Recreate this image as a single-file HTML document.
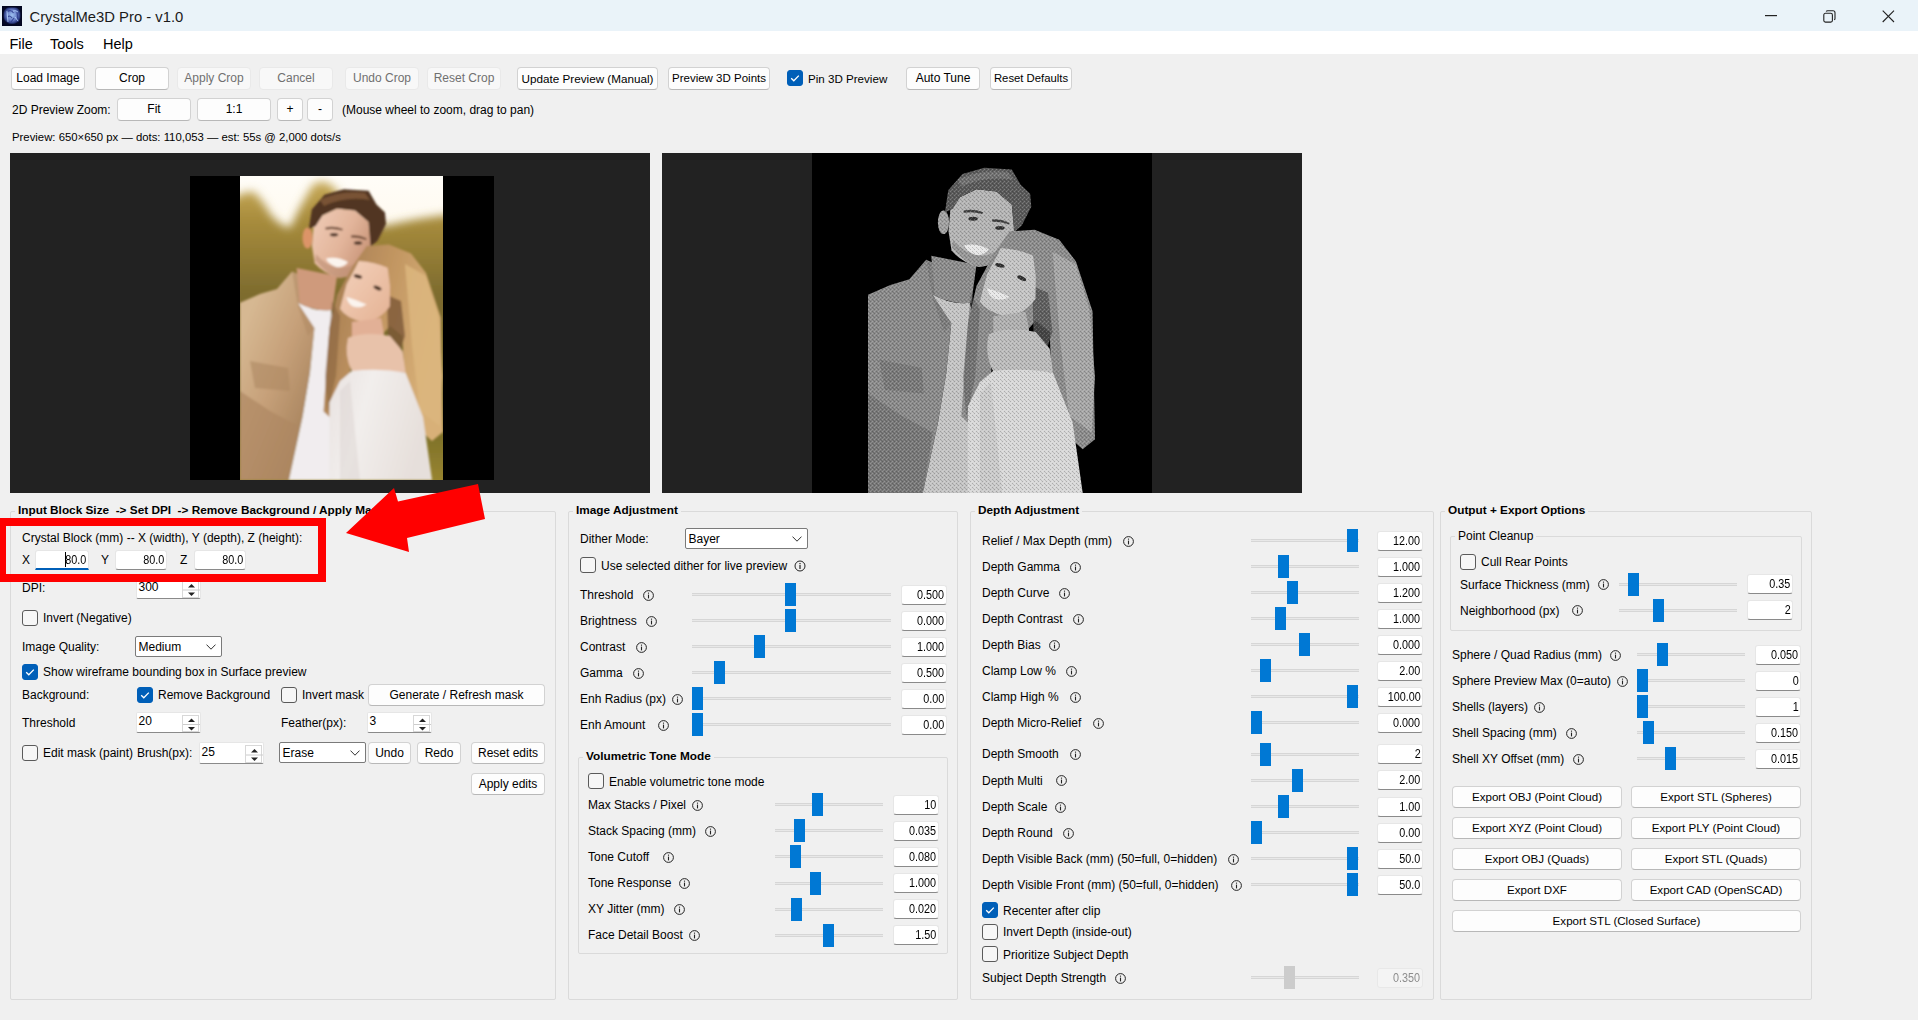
<!DOCTYPE html><html><head><meta charset="utf-8"><title>CrystalMe3D Pro - v1.0</title><style>
*{margin:0;padding:0;box-sizing:border-box}
html,body{width:1918px;height:1020px;overflow:hidden;background:#f0f0f0;font-family:"Liberation Sans", sans-serif;}
.t{position:absolute;white-space:nowrap;line-height:1;}
.btn{position:absolute;background:#fdfdfd;border:1px solid #d2d2d2;border-bottom-color:#b8b8b8;border-radius:4px;text-align:center;color:#000;white-space:nowrap}
.btn.dis{background:#f8f8f8;border-color:#e9e9e9;color:#707070}
.chk{position:absolute;width:16px;height:16px;border:1px solid #5a5a5a;border-radius:3px;background:#f6f6f6}
.chk.on{background:#005fb8;border-color:#005fb8}
.chk svg{position:absolute;left:-1px;top:-1px}
.ic{position:absolute}
.ent{position:absolute;background:#fff;border:1px solid #e6e6e6;border-bottom:1px solid #8a8a8a;border-radius:3px;text-align:right;padding-right:1.5px;font-size:12px;color:#000}
.ent.dis{background:#f4f4f4;border-color:#e8e8e8;color:#8c8c8c}
.ent.foc{border-bottom:2px solid #005fb8;border-radius:3px 3px 0 0}
.num{display:inline-block;transform:scaleX(0.9);transform-origin:100% 50%}
.car{position:absolute;left:28.7px;top:1px;width:1.2px;height:15px;background:#000}
.trk{position:absolute;height:3px;background:#e8e8e8;border-top:1px solid #d6d6d6;border-bottom:1px solid #d6d6d6}
.thm{position:absolute;width:11px;height:23px;background:#0078d4}
.thm.dis{background:#cccccc}
.frm{position:absolute;border:1px solid #dadada;border-radius:2px}
.ftl{background:#f0f0f0;white-space:pre}
.cmb{position:absolute;background:#fff;border:1px solid #7a7a7a;border-radius:2px;padding-left:2.5px;font-size:12px}
.spn{position:absolute;background:#fff;border:1px solid #e6e6e6;border-bottom:1px solid #8a8a8a;border-radius:2px;padding-left:1.5px;font-size:12px}
.sar{position:absolute;right:1px;top:2px;width:17px;border:1px solid #d8d8d8;background:#fff}
</style></head><body>
<div style="position:absolute;left:0;top:0;width:1918px;height:31px;background:#eaf3f9"></div>
<div style="position:absolute;left:0;top:31px;width:1918px;height:23px;background:#ffffff"></div>
<svg style="position:absolute;left:2px;top:6px" width="20" height="20" viewBox="0 0 20 20"><defs><radialGradient id="ig" cx="50%" cy="45%" r="55%"><stop offset="0" stop-color="#9cc0f0"/><stop offset="0.55" stop-color="#6a80c8"/><stop offset="0.85" stop-color="#2a3a80"/><stop offset="1" stop-color="#050a28"/></radialGradient></defs><rect width="20" height="20" fill="#020620"/><rect x="1.5" y="1.5" width="17" height="17" fill="url(#ig)"/><path d="M5 6 Q9 3 11.5 7 M15 5.5 L16 16 M5.5 11 Q8 9 10 12 M12 12 L9 16" fill="none" stroke="#2a3a8a" stroke-width="1.2" opacity="0.8"/><path d="M5 5 L6 16 M11 5 Q14 4 16 6 M13 11 L16 15" fill="none" stroke="#b8d8ff" stroke-width="1" opacity="0.8"/></svg>
<div class="t" style="left:29.5px;top:9.77px;font-size:14.8px;color:#1a1a1a;">CrystalMe3D Pro - v1.0</div>
<svg style="position:absolute;left:1765px;top:15px" width="12" height="2"><rect width="12" height="1.2" fill="#222"/></svg>
<svg style="position:absolute;left:1823px;top:10px" width="13" height="13" viewBox="0 0 13 13"><rect x="0.8" y="3.3" width="8.6" height="8.8" rx="1.6" fill="none" stroke="#222" stroke-width="1.1"/><path d="M3.2 1.6 Q3.6 0.8 4.6 0.8 L10 0.8 Q12 0.8 12 2.8 L12 8.4 Q12 9.4 11.2 9.8" fill="none" stroke="#222" stroke-width="1.1"/></svg>
<svg style="position:absolute;left:1882px;top:9.5px" width="13" height="13" viewBox="0 0 13 13"><path d="M0.7 0.7 L12 12 M12 0.7 L0.7 12" stroke="#222" stroke-width="1.1"/></svg>
<div class="t" style="left:9.5px;top:37.22px;font-size:14.5px;color:#000;">File</div>
<div class="t" style="left:50px;top:37.22px;font-size:14.5px;color:#000;">Tools</div>
<div class="t" style="left:103px;top:37.22px;font-size:14.5px;color:#000;">Help</div>
<div class="btn" style="left:11px;top:67px;width:74px;height:23px;line-height:21.5px;font-size:12px">Load Image</div>
<div class="btn" style="left:95px;top:67px;width:74px;height:23px;line-height:21.5px;font-size:12px">Crop</div>
<div class="btn dis" style="left:177px;top:67px;width:74px;height:23px;line-height:21.5px;font-size:12px">Apply Crop</div>
<div class="btn dis" style="left:259px;top:67px;width:74px;height:23px;line-height:21.5px;font-size:12px">Cancel</div>
<div class="btn dis" style="left:345px;top:67px;width:74px;height:23px;line-height:21.5px;font-size:12px">Undo Crop</div>
<div class="btn dis" style="left:427px;top:67px;width:74px;height:23px;line-height:21.5px;font-size:12px">Reset Crop</div>
<div class="btn" style="left:517px;top:67px;width:141px;height:23px;line-height:21.5px;font-size:11.7px">Update Preview (Manual)</div>
<div class="btn" style="left:668px;top:67px;width:102px;height:23px;line-height:21.5px;font-size:11.5px">Preview 3D Points</div>
<div class="chk on" style="left:787px;top:70.0px"><svg width="16" height="16" viewBox="0 0 16 16"><path d="M4.2 8.2 L6.8 10.8 L11.8 5.6" fill="none" stroke="#fff" stroke-width="1.3"/></svg></div>
<div class="t" style="left:808px;top:72.83px;font-size:11.6px;color:#000;">Pin 3D Preview</div>
<div class="btn" style="left:906px;top:67px;width:74px;height:23px;line-height:21.5px;font-size:12px">Auto Tune</div>
<div class="btn" style="left:990px;top:67px;width:82px;height:23px;line-height:21.5px;font-size:11.3px">Reset Defaults</div>
<div class="t" style="left:12px;top:103.64px;font-size:12px;color:#000;">2D Preview Zoom:</div>
<div class="btn" style="left:117px;top:98px;width:74px;height:23px;line-height:21.5px;font-size:12px">Fit</div>
<div class="btn" style="left:197px;top:98px;width:74px;height:23px;line-height:21.5px;font-size:12px">1:1</div>
<div class="btn" style="left:277px;top:98px;width:26px;height:23px;line-height:21.5px;font-size:12px">+</div>
<div class="btn" style="left:307px;top:98px;width:26px;height:23px;line-height:21.5px;font-size:12px">-</div>
<div class="t" style="left:342px;top:103.64px;font-size:12px;color:#000;">(Mouse wheel to zoom, drag to pan)</div>
<div class="t" style="left:12px;top:131.96px;font-size:11.35px;color:#000;">Preview: 650×650 px — dots: 110,053 — est: 55s @ 2,000 dots/s</div>
<div style="position:absolute;left:10px;top:153px;width:640px;height:340px;background:#222222"></div>
<div style="position:absolute;left:190px;top:176px;width:304px;height:304px;background:#000"></div>
<svg style="position:absolute;left:240px;top:176px" width="203" height="304" viewBox="0 0 203 304">
<defs>
<linearGradient id="sky" x1="0" y1="0" x2="0" y2="1"><stop offset="0" stop-color="#fffdf8"/><stop offset="0.15" stop-color="#fffaf0"/><stop offset="0.3" stop-color="#f4e4c0"/><stop offset="1" stop-color="#c0a048"/></linearGradient>
<linearGradient id="tree" x1="0" y1="0" x2="0" y2="1"><stop offset="0" stop-color="#c8aa58"/><stop offset="0.12" stop-color="#a88c3c"/><stop offset="0.35" stop-color="#7e6c2e"/><stop offset="0.7" stop-color="#6c6428"/><stop offset="1" stop-color="#a08a30"/></linearGradient>
<linearGradient id="gjk" x1="0" y1="0.3" x2="0.6" y2="1"><stop offset="0" stop-color="#d6b892"/><stop offset="0.5" stop-color="#c6a079"/><stop offset="1" stop-color="#a8845e"/></linearGradient>
<linearGradient id="gfc" x1="0" y1="0" x2="1" y2="0.6"><stop offset="0" stop-color="#f0cdb8"/><stop offset="0.6" stop-color="#e2b49a"/><stop offset="1" stop-color="#c89478"/></linearGradient>
<linearGradient id="gwh" x1="0" y1="0" x2="1" y2="0.4"><stop offset="0" stop-color="#a07850"/><stop offset="0.5" stop-color="#c09460"/><stop offset="1" stop-color="#d8b078"/></linearGradient>
<linearGradient id="gwf" x1="0" y1="0" x2="1" y2="1"><stop offset="0" stop-color="#f4d2bc"/><stop offset="1" stop-color="#e4b294"/></linearGradient>
<linearGradient id="gtp" x1="0" y1="0" x2="1" y2="0.3"><stop offset="0" stop-color="#e8e2e0"/><stop offset="0.4" stop-color="#f2eeec"/><stop offset="1" stop-color="#e6dfdb"/></linearGradient>
<filter id="bl6" x="-20%" y="-20%" width="140%" height="140%"><feGaussianBlur stdDeviation="5"/></filter>
<filter id="bl1" x="-5%" y="-5%" width="110%" height="110%"><feGaussianBlur stdDeviation="1.0"/></filter>
</defs>
<rect width="203" height="304" fill="url(#sky)"/>
<path d="M-10,24 Q6,14 14,16 Q24,26 30,38 Q40,50 50,52 Q60,30 72,10 Q84,0 96,14 L118,40 L145,50 Q176,42 215,38 L215,320 L-10,320 Z" fill="url(#tree)" filter="url(#bl6)"/>
<g filter="url(#bl1)">
<path d="M0,126.7 L20,118 L37,113 L52,95.4 L62,100 L74.5,152 L70,196.7 L62.6,241 L49,304 L0,304 Z" fill="url(#gjk)"/>
<path d="M0,215 L0,304 L49,304 L58,250 L30,235 Z" fill="#ae8862" opacity="0.7"/>
<path d="M10,185 L48,192 L50,215 L15,212 Z" fill="#ae8862" opacity="0.6"/>
<path d="M52,95.4 L62,100 L74.5,152 L68,160 L58,130 Z" fill="#ae8862" opacity="0.5"/>
<path d="M58,127 Q75,136 91,134 L95.4,152 L89.4,226.5 L92.4,304 L49,304 L62.6,241 L70,196.7 L74.5,152 Z" fill="#f1edef"/>
<path d="M56.6,92 L97,100 L92.4,134 Q75,136 59.6,126.7 Z" fill="#cf9a7c"/>
<path d="M73.7,50 L82.5,39.3 L97,32.4 L115,34.4 L128.6,46 L131,70 L130.6,82.4 L123.7,92.2 Q112,101 99,102 Q84,98 74.7,87.3 L72,70 Z" fill="url(#gfc)"/>
<path d="M75,84 Q88,100 100,102 Q115,100 124,92 L126,80 Q112,92 100,92 Q86,90 76,78 Z" fill="#b88a70" opacity="0.55"/>
<ellipse cx="67.5" cy="62" rx="5" ry="10.5" fill="#dc9468"/>
<path d="M85.5,51.5 Q94,49.5 103,53 L102,54.5 Q94,52 85.5,53.5 Z" fill="#6a4630"/>
<path d="M111,59.5 Q119,58.5 126.7,62.5 L126,64 Q119,61 111,61.5 Z" fill="#6a4630"/>
<ellipse cx="94" cy="58.8" rx="4.2" ry="1.7" fill="#4a3024"/>
<ellipse cx="118" cy="67" rx="4.2" ry="1.7" fill="#4a3024"/>
<path d="M86,82.5 Q97,80 108,86 Q104,92 96,91 Q88,88 86,82.5 Z" fill="#fbf4ee"/>
<path d="M68.8,53 L71.8,33.4 L84.5,18.7 L104,13.3 L128.6,14.8 L136.5,28.5 L145,36.4 L146,48 L137.5,64.8 L130.6,70.7 L128.6,46 L115,34.4 L97,32.4 L82.5,39.3 L75.7,50 Z" fill="#513621"/>
<path d="M80,24 Q100,14 125,17 L130,24 Q105,20 84,30 Z" fill="#8a6040" opacity="0.7"/>
<path d="M126.7,70 L149,68.6 L171,77.5 L186,97 L200.8,141.5 L203,256 L192,265 L165.5,241 L162.5,160 L150,150 L141,160 L112,160 L110,200 L100,220 L89.4,241 L83.5,235.5 L89.4,152 L97,119 L113,89.4 Z" fill="url(#gwh)"/>
<path d="M165,88 L186,100 L198,140 L203,200 L200,250 L180,235 L172,170 Z" fill="#dcb67e" opacity="0.85"/>
<path d="M147,119 L161,125 L165,160 L160,175 L148,160 Z" fill="#7c5838" opacity="0.8"/>
<path d="M92,125 L100,140 L96,200 L88,236 L85,200 Z" fill="#7c5838" opacity="0.45"/>
<path d="M118.8,85 Q135,86 147.6,91.7 L150,110 L149.8,130.5 Q138,146 123.2,146 Q106,142 100,132.7 L106.6,108.3 L115.5,91.7 Z" fill="url(#gwf)"/>
<ellipse cx="118" cy="100.5" rx="4.3" ry="1.8" fill="#4a3024" transform="rotate(15 118 100.5)"/>
<ellipse cx="137.5" cy="112" rx="4.3" ry="1.8" fill="#4a3024" transform="rotate(25 137.5 112)"/>
<path d="M106.6,121 Q117,124 126.6,128.5 Q120,133 112,130 Q107,126 106.6,121 Z" fill="#fbf4ee"/>
<path d="M112,146 L141,142 L145,164 L112,164 Z" fill="#e2b096"/>
<path d="M108,162 Q125,155 150,160 L162.5,175 L165.5,196.7 L111.8,195 Q104,180 108,162 Z" fill="#e8c2aa"/>
<path d="M89.4,226.5 L100,205 L111.8,195 Q140,192 165.5,196.7 L183,241 L192,304 L89.4,304 Z" fill="url(#gtp)"/>
<path d="M100,215 L110,205 L120,304 L100,304 Z" fill="#d8d0cc" opacity="0.4"/>
</g>
</svg>
<div style="position:absolute;left:662px;top:153px;width:640px;height:340px;background:#222222"></div>
<div style="position:absolute;left:812px;top:153px;width:340px;height:340px;background:#000"></div>
<svg style="position:absolute;left:868px;top:153px" width="228" height="340" viewBox="0 0 228 340">
<defs>
<filter id="gbl" x="-5%" y="-5%" width="110%" height="110%"><feGaussianBlur stdDeviation="0.8"/></filter>
<pattern id="dth" width="4" height="4" patternUnits="userSpaceOnUse"><rect x="0" y="0" width="1" height="1" fill="#fff" fill-opacity="0.22"/><rect x="2" y="2" width="1" height="1" fill="#fff" fill-opacity="0.22"/><rect x="2" y="0" width="1" height="1" fill="#000" fill-opacity="0.2"/><rect x="0" y="2" width="1" height="1" fill="#000" fill-opacity="0.2"/><rect x="1" y="3" width="1" height="1" fill="#000" fill-opacity="0.12"/><rect x="3" y="1" width="1" height="1" fill="#fff" fill-opacity="0.12"/></pattern>
<mask id="fm"><g transform="scale(1.1182)">
<path d="M0,126.7 L20,118 L37,113 L52,95.4 L62,100 L74.5,152 L70,196.7 L62.6,241 L49,304 L0,304 Z" fill="#ffffff"/>
<path d="M0,215 L0,304 L49,304 L58,250 L30,235 Z" fill="#ffffff" opacity="0.7"/>
<path d="M10,185 L48,192 L50,215 L15,212 Z" fill="#ffffff" opacity="0.6"/>
<path d="M52,95.4 L62,100 L74.5,152 L68,160 L58,130 Z" fill="#ffffff" opacity="0.5"/>
<path d="M58,127 Q75,136 91,134 L95.4,152 L89.4,226.5 L92.4,304 L49,304 L62.6,241 L70,196.7 L74.5,152 Z" fill="#ffffff"/>
<path d="M56.6,92 L97,100 L92.4,134 Q75,136 59.6,126.7 Z" fill="#ffffff"/>
<path d="M73.7,50 L82.5,39.3 L97,32.4 L115,34.4 L128.6,46 L131,70 L130.6,82.4 L123.7,92.2 Q112,101 99,102 Q84,98 74.7,87.3 L72,70 Z" fill="#ffffff"/>
<path d="M75,84 Q88,100 100,102 Q115,100 124,92 L126,80 Q112,92 100,92 Q86,90 76,78 Z" fill="#ffffff" opacity="0.55"/>
<ellipse cx="67.5" cy="62" rx="5" ry="10.5" fill="#ffffff"/>
<path d="M85.5,51.5 Q94,49.5 103,53 L102,54.5 Q94,52 85.5,53.5 Z" fill="#ffffff"/>
<path d="M111,59.5 Q119,58.5 126.7,62.5 L126,64 Q119,61 111,61.5 Z" fill="#ffffff"/>
<ellipse cx="94" cy="58.8" rx="4.2" ry="1.7" fill="#ffffff"/>
<ellipse cx="118" cy="67" rx="4.2" ry="1.7" fill="#ffffff"/>
<path d="M86,82.5 Q97,80 108,86 Q104,92 96,91 Q88,88 86,82.5 Z" fill="#ffffff"/>
<path d="M68.8,53 L71.8,33.4 L84.5,18.7 L104,13.3 L128.6,14.8 L136.5,28.5 L145,36.4 L146,48 L137.5,64.8 L130.6,70.7 L128.6,46 L115,34.4 L97,32.4 L82.5,39.3 L75.7,50 Z" fill="#ffffff"/>
<path d="M80,24 Q100,14 125,17 L130,24 Q105,20 84,30 Z" fill="#ffffff" opacity="0.7"/>
<path d="M126.7,70 L149,68.6 L171,77.5 L186,97 L200.8,141.5 L203,256 L192,265 L165.5,241 L162.5,160 L150,150 L141,160 L112,160 L110,200 L100,220 L89.4,241 L83.5,235.5 L89.4,152 L97,119 L113,89.4 Z" fill="#ffffff"/>
<path d="M165,88 L186,100 L198,140 L203,200 L200,250 L180,235 L172,170 Z" fill="#ffffff" opacity="0.85"/>
<path d="M147,119 L161,125 L165,160 L160,175 L148,160 Z" fill="#ffffff" opacity="0.8"/>
<path d="M92,125 L100,140 L96,200 L88,236 L85,200 Z" fill="#ffffff" opacity="0.45"/>
<path d="M118.8,85 Q135,86 147.6,91.7 L150,110 L149.8,130.5 Q138,146 123.2,146 Q106,142 100,132.7 L106.6,108.3 L115.5,91.7 Z" fill="#ffffff"/>
<ellipse cx="118" cy="100.5" rx="4.3" ry="1.8" fill="#ffffff" transform="rotate(15 118 100.5)"/>
<ellipse cx="137.5" cy="112" rx="4.3" ry="1.8" fill="#ffffff" transform="rotate(25 137.5 112)"/>
<path d="M106.6,121 Q117,124 126.6,128.5 Q120,133 112,130 Q107,126 106.6,121 Z" fill="#ffffff"/>
<path d="M112,146 L141,142 L145,164 L112,164 Z" fill="#ffffff"/>
<path d="M108,162 Q125,155 150,160 L162.5,175 L165.5,196.7 L111.8,195 Q104,180 108,162 Z" fill="#ffffff"/>
<path d="M89.4,226.5 L100,205 L111.8,195 Q140,192 165.5,196.7 L183,241 L192,304 L89.4,304 Z" fill="#ffffff"/>
<path d="M100,215 L110,205 L120,304 L100,304 Z" fill="#ffffff" opacity="0.4"/>
</g></mask>
</defs>
<g transform="scale(1.1182)">
<path d="M0,126.7 L20,118 L37,113 L52,95.4 L62,100 L74.5,152 L70,196.7 L62.6,241 L49,304 L0,304 Z" fill="#8a8a8a"/>
<path d="M0,215 L0,304 L49,304 L58,250 L30,235 Z" fill="#707070" opacity="0.7"/>
<path d="M10,185 L48,192 L50,215 L15,212 Z" fill="#707070" opacity="0.6"/>
<path d="M52,95.4 L62,100 L74.5,152 L68,160 L58,130 Z" fill="#707070" opacity="0.5"/>
<path d="M58,127 Q75,136 91,134 L95.4,152 L89.4,226.5 L92.4,304 L49,304 L62.6,241 L70,196.7 L74.5,152 Z" fill="#c4c4c4"/>
<path d="M56.6,92 L97,100 L92.4,134 Q75,136 59.6,126.7 Z" fill="#8c8c8c"/>
<path d="M73.7,50 L82.5,39.3 L97,32.4 L115,34.4 L128.6,46 L131,70 L130.6,82.4 L123.7,92.2 Q112,101 99,102 Q84,98 74.7,87.3 L72,70 Z" fill="#b4b4b4"/>
<path d="M75,84 Q88,100 100,102 Q115,100 124,92 L126,80 Q112,92 100,92 Q86,90 76,78 Z" fill="#808080" opacity="0.55"/>
<ellipse cx="67.5" cy="62" rx="5" ry="10.5" fill="#a0a0a0"/>
<path d="M85.5,51.5 Q94,49.5 103,53 L102,54.5 Q94,52 85.5,53.5 Z" fill="#404040"/>
<path d="M111,59.5 Q119,58.5 126.7,62.5 L126,64 Q119,61 111,61.5 Z" fill="#404040"/>
<ellipse cx="94" cy="58.8" rx="4.2" ry="1.7" fill="#303030"/>
<ellipse cx="118" cy="67" rx="4.2" ry="1.7" fill="#303030"/>
<path d="M86,82.5 Q97,80 108,86 Q104,92 96,91 Q88,88 86,82.5 Z" fill="#e8e8e8"/>
<path d="M68.8,53 L71.8,33.4 L84.5,18.7 L104,13.3 L128.6,14.8 L136.5,28.5 L145,36.4 L146,48 L137.5,64.8 L130.6,70.7 L128.6,46 L115,34.4 L97,32.4 L82.5,39.3 L75.7,50 Z" fill="#5a5a5a"/>
<path d="M80,24 Q100,14 125,17 L130,24 Q105,20 84,30 Z" fill="#7a7a7a" opacity="0.7"/>
<path d="M126.7,70 L149,68.6 L171,77.5 L186,97 L200.8,141.5 L203,256 L192,265 L165.5,241 L162.5,160 L150,150 L141,160 L112,160 L110,200 L100,220 L89.4,241 L83.5,235.5 L89.4,152 L97,119 L113,89.4 Z" fill="#8c8c8c"/>
<path d="M165,88 L186,100 L198,140 L203,200 L200,250 L180,235 L172,170 Z" fill="#aaaaaa" opacity="0.85"/>
<path d="M147,119 L161,125 L165,160 L160,175 L148,160 Z" fill="#555555" opacity="0.8"/>
<path d="M92,125 L100,140 L96,200 L88,236 L85,200 Z" fill="#555555" opacity="0.45"/>
<path d="M118.8,85 Q135,86 147.6,91.7 L150,110 L149.8,130.5 Q138,146 123.2,146 Q106,142 100,132.7 L106.6,108.3 L115.5,91.7 Z" fill="#c4c4c4"/>
<ellipse cx="118" cy="100.5" rx="4.3" ry="1.8" fill="#303030" transform="rotate(15 118 100.5)"/>
<ellipse cx="137.5" cy="112" rx="4.3" ry="1.8" fill="#303030" transform="rotate(25 137.5 112)"/>
<path d="M106.6,121 Q117,124 126.6,128.5 Q120,133 112,130 Q107,126 106.6,121 Z" fill="#e8e8e8"/>
<path d="M112,146 L141,142 L145,164 L112,164 Z" fill="#b0b0b0"/>
<path d="M108,162 Q125,155 150,160 L162.5,175 L165.5,196.7 L111.8,195 Q104,180 108,162 Z" fill="#bcbcbc"/>
<path d="M89.4,226.5 L100,205 L111.8,195 Q140,192 165.5,196.7 L183,241 L192,304 L89.4,304 Z" fill="#d8d8d8"/>
<path d="M100,215 L110,205 L120,304 L100,304 Z" fill="#b8b8b8" opacity="0.4"/>
</g>
<rect width="228" height="340" fill="url(#dth)" mask="url(#fm)"/>
</svg>
<div class="frm" style="left:10px;top:511px;width:546px;height:489px"></div>
<div class="t ftl" style="left:15px;top:505.24px;font-size:11.8px;font-weight:bold;padding:0 3px">Input Block Size  -&gt; Set DPI  -&gt; Remove Background / Apply Mask</div>
<div class="frm" style="left:568px;top:511px;width:390px;height:489px"></div>
<div class="t ftl" style="left:573px;top:505.24px;font-size:11.8px;font-weight:bold;padding:0 3px">Image Adjustment</div>
<div class="frm" style="left:970px;top:511px;width:464px;height:489px"></div>
<div class="t ftl" style="left:975px;top:505.24px;font-size:11.8px;font-weight:bold;padding:0 3px">Depth Adjustment</div>
<div class="frm" style="left:1440px;top:511px;width:372px;height:489px"></div>
<div class="t ftl" style="left:1445px;top:505.24px;font-size:11.8px;font-weight:bold;padding:0 3px">Output + Export Options</div>
<div class="t" style="left:22px;top:531.64px;font-size:12px;color:#000;">Crystal Block (mm) -- X (width), Y (depth), Z (height):</div>
<div class="t" style="left:22px;top:553.64px;font-size:12px;color:#000;">X</div>
<div class="ent foc" style="left:35px;top:550px;width:54px;height:20px;line-height:19px"><i class="car"></i><span class="num">80.0</span></div>
<div class="t" style="left:101px;top:553.64px;font-size:12px;color:#000;">Y</div>
<div class="ent" style="left:115px;top:550px;width:52px;height:20px;line-height:19px"><span class="num">80.0</span></div>
<div class="t" style="left:180px;top:553.64px;font-size:12px;color:#000;">Z</div>
<div class="ent" style="left:194px;top:550px;width:52px;height:20px;line-height:19px"><span class="num">80.0</span></div>
<div class="t" style="left:22px;top:581.64px;font-size:12px;color:#000;">DPI:</div>
<div class="spn" style="left:136px;top:577px;width:65px;height:22px;line-height:18px">300<div class="sar" style="height:18px"><svg width="17" height="18" viewBox="0 0 17 18"><line x1="0" y1="9.0" x2="17" y2="9.0" stroke="#ccc"/><path d="M5 6.5 L8.5 3.0 L12 6.5Z" fill="#222"/><path d="M5 11.5 L8.5 15.0 L12 11.5Z" fill="#222"/></svg></div></div>
<div class="chk" style="left:22px;top:609.5px"></div>
<div class="t" style="left:43px;top:611.64px;font-size:12px;color:#000;">Invert (Negative)</div>
<div class="t" style="left:22px;top:640.64px;font-size:12px;color:#000;">Image Quality:</div>
<div class="cmb" style="left:135px;top:636px;width:87px;height:21px;line-height:20.5px">Medium<svg style="position:absolute;right:5px;top:7.0px" width="10" height="6" viewBox="0 0 10 6"><path d="M0.5 0.6 L5 5.2 L9.5 0.6" fill="none" stroke="#333" stroke-width="1"/></svg></div>
<div class="chk on" style="left:22px;top:663.5px"><svg width="16" height="16" viewBox="0 0 16 16"><path d="M4.2 8.2 L6.8 10.8 L11.8 5.6" fill="none" stroke="#fff" stroke-width="1.3"/></svg></div>
<div class="t" style="left:43px;top:665.64px;font-size:12px;color:#000;">Show wireframe bounding box in Surface preview</div>
<div class="t" style="left:22px;top:688.64px;font-size:12px;color:#000;">Background:</div>
<div class="chk on" style="left:137px;top:686.5px"><svg width="16" height="16" viewBox="0 0 16 16"><path d="M4.2 8.2 L6.8 10.8 L11.8 5.6" fill="none" stroke="#fff" stroke-width="1.3"/></svg></div>
<div class="t" style="left:158px;top:688.64px;font-size:12px;color:#000;">Remove Background</div>
<div class="chk" style="left:281px;top:686.5px"></div>
<div class="t" style="left:302px;top:688.64px;font-size:12px;color:#000;">Invert mask</div>
<div class="btn" style="left:368px;top:684px;width:177px;height:22px;line-height:20.5px;font-size:12px">Generate / Refresh mask</div>
<div class="t" style="left:22px;top:716.64px;font-size:12px;color:#000;">Threshold</div>
<div class="spn" style="left:136px;top:712px;width:65px;height:21px;line-height:17px">20<div class="sar" style="height:17px"><svg width="17" height="17" viewBox="0 0 17 17"><line x1="0" y1="8.5" x2="17" y2="8.5" stroke="#ccc"/><path d="M5 6.0 L8.5 2.5 L12 6.0Z" fill="#222"/><path d="M5 11.0 L8.5 14.5 L12 11.0Z" fill="#222"/></svg></div></div>
<div class="t" style="left:281px;top:716.64px;font-size:12px;color:#000;">Feather(px):</div>
<div class="spn" style="left:367px;top:712px;width:65px;height:21px;line-height:17px">3<div class="sar" style="height:17px"><svg width="17" height="17" viewBox="0 0 17 17"><line x1="0" y1="8.5" x2="17" y2="8.5" stroke="#ccc"/><path d="M5 6.0 L8.5 2.5 L12 6.0Z" fill="#222"/><path d="M5 11.0 L8.5 14.5 L12 11.0Z" fill="#222"/></svg></div></div>
<div class="chk" style="left:22px;top:744.5px"></div>
<div class="t" style="left:43px;top:746.64px;font-size:12px;color:#000;">Edit mask (paint)</div>
<div class="t" style="left:137px;top:746.64px;font-size:12px;color:#000;">Brush(px):</div>
<div class="spn" style="left:199px;top:742px;width:65px;height:22px;line-height:18px">25<div class="sar" style="height:18px"><svg width="17" height="18" viewBox="0 0 17 18"><line x1="0" y1="9.0" x2="17" y2="9.0" stroke="#ccc"/><path d="M5 6.5 L8.5 3.0 L12 6.5Z" fill="#222"/><path d="M5 11.5 L8.5 15.0 L12 11.5Z" fill="#222"/></svg></div></div>
<div class="cmb" style="left:279px;top:742px;width:87px;height:21px;line-height:20.5px">Erase<svg style="position:absolute;right:5px;top:7.0px" width="10" height="6" viewBox="0 0 10 6"><path d="M0.5 0.6 L5 5.2 L9.5 0.6" fill="none" stroke="#333" stroke-width="1"/></svg></div>
<div class="btn" style="left:368px;top:742px;width:43px;height:22px;line-height:20.5px;font-size:12px">Undo</div>
<div class="btn" style="left:417px;top:742px;width:44px;height:22px;line-height:20.5px;font-size:12px">Redo</div>
<div class="btn" style="left:471px;top:742px;width:74px;height:22px;line-height:20.5px;font-size:12px">Reset edits</div>
<div class="btn" style="left:471px;top:773px;width:74px;height:22px;line-height:20.5px;font-size:12px">Apply edits</div>
<div class="t" style="left:580px;top:532.64px;font-size:12px;color:#000;">Dither Mode:</div>
<div class="cmb" style="left:685px;top:528px;width:123px;height:21px;line-height:20.5px">Bayer<svg style="position:absolute;right:5px;top:7.0px" width="10" height="6" viewBox="0 0 10 6"><path d="M0.5 0.6 L5 5.2 L9.5 0.6" fill="none" stroke="#333" stroke-width="1"/></svg></div>
<div class="chk" style="left:580px;top:557.0px"></div>
<div class="t" style="left:601px;top:559.64px;font-size:12px;color:#000;">Use selected dither for live preview</div>
<svg class="ic" style="left:794px;top:560px" width="12" height="12" viewBox="0 0 12 12"><circle cx="6" cy="6" r="5" fill="none" stroke="#222" stroke-width="1"/><rect x="5.4" y="5" width="1.2" height="4" fill="#222"/><rect x="5.4" y="3" width="1.2" height="1.2" fill="#222"/></svg>
<div class="t" style="left:580px;top:588.64px;font-size:12px;color:#000;">Threshold</div>
<div class="trk" style="left:692px;top:593.0px;width:199px"></div>
<div class="thm" style="left:785px;top:583.0px"></div>
<div class="ent" style="left:901px;top:585px;width:46px;height:20px;line-height:19px"><span class="num">0.500</span></div>
<svg class="ic" style="left:643.4px;top:589.5px" width="11" height="11" viewBox="0 0 11 11"><circle cx="5.5" cy="5.5" r="4.9" fill="none" stroke="#222" stroke-width="1"/><rect x="4.95" y="4.6" width="1.1" height="3.8" fill="#222"/><rect x="4.95" y="2.6" width="1.1" height="1.1" fill="#222"/></svg>
<div class="t" style="left:580px;top:614.64px;font-size:12px;color:#000;">Brightness</div>
<div class="trk" style="left:692px;top:619.0px;width:199px"></div>
<div class="thm" style="left:785px;top:609.0px"></div>
<div class="ent" style="left:901px;top:611px;width:46px;height:20px;line-height:19px"><span class="num">0.000</span></div>
<svg class="ic" style="left:645.5px;top:615.5px" width="11" height="11" viewBox="0 0 11 11"><circle cx="5.5" cy="5.5" r="4.9" fill="none" stroke="#222" stroke-width="1"/><rect x="4.95" y="4.6" width="1.1" height="3.8" fill="#222"/><rect x="4.95" y="2.6" width="1.1" height="1.1" fill="#222"/></svg>
<div class="t" style="left:580px;top:640.64px;font-size:12px;color:#000;">Contrast</div>
<div class="trk" style="left:692px;top:645.0px;width:199px"></div>
<div class="thm" style="left:754px;top:635.0px"></div>
<div class="ent" style="left:901px;top:637px;width:46px;height:20px;line-height:19px"><span class="num">1.000</span></div>
<svg class="ic" style="left:635.5px;top:641.5px" width="11" height="11" viewBox="0 0 11 11"><circle cx="5.5" cy="5.5" r="4.9" fill="none" stroke="#222" stroke-width="1"/><rect x="4.95" y="4.6" width="1.1" height="3.8" fill="#222"/><rect x="4.95" y="2.6" width="1.1" height="1.1" fill="#222"/></svg>
<div class="t" style="left:580px;top:666.64px;font-size:12px;color:#000;">Gamma</div>
<div class="trk" style="left:692px;top:671.0px;width:199px"></div>
<div class="thm" style="left:714px;top:661.0px"></div>
<div class="ent" style="left:901px;top:663px;width:46px;height:20px;line-height:19px"><span class="num">0.500</span></div>
<svg class="ic" style="left:632.5px;top:667.5px" width="11" height="11" viewBox="0 0 11 11"><circle cx="5.5" cy="5.5" r="4.9" fill="none" stroke="#222" stroke-width="1"/><rect x="4.95" y="4.6" width="1.1" height="3.8" fill="#222"/><rect x="4.95" y="2.6" width="1.1" height="1.1" fill="#222"/></svg>
<div class="t" style="left:580px;top:692.64px;font-size:12px;color:#000;">Enh Radius (px)</div>
<div class="trk" style="left:692px;top:697.0px;width:199px"></div>
<div class="thm" style="left:692px;top:687.0px"></div>
<div class="ent" style="left:901px;top:689px;width:46px;height:20px;line-height:19px"><span class="num">0.00</span></div>
<svg class="ic" style="left:671.5px;top:693.5px" width="11" height="11" viewBox="0 0 11 11"><circle cx="5.5" cy="5.5" r="4.9" fill="none" stroke="#222" stroke-width="1"/><rect x="4.95" y="4.6" width="1.1" height="3.8" fill="#222"/><rect x="4.95" y="2.6" width="1.1" height="1.1" fill="#222"/></svg>
<div class="t" style="left:580px;top:718.64px;font-size:12px;color:#000;">Enh Amount</div>
<div class="trk" style="left:692px;top:723.0px;width:199px"></div>
<div class="thm" style="left:692px;top:713.0px"></div>
<div class="ent" style="left:901px;top:715px;width:46px;height:20px;line-height:19px"><span class="num">0.00</span></div>
<svg class="ic" style="left:657.5px;top:719.5px" width="11" height="11" viewBox="0 0 11 11"><circle cx="5.5" cy="5.5" r="4.9" fill="none" stroke="#222" stroke-width="1"/><rect x="4.95" y="4.6" width="1.1" height="3.8" fill="#222"/><rect x="4.95" y="2.6" width="1.1" height="1.1" fill="#222"/></svg>
<div class="frm" style="left:578px;top:757px;width:370px;height:197px"></div>
<div class="t ftl" style="left:583px;top:751.24px;font-size:11.8px;font-weight:bold;padding:0 3px">Volumetric Tone Mode</div>
<div class="chk" style="left:588px;top:773.0px"></div>
<div class="t" style="left:609px;top:775.64px;font-size:12px;color:#000;">Enable volumetric tone mode</div>
<div class="t" style="left:588px;top:798.94px;font-size:12px;color:#000;">Max Stacks / Pixel</div>
<div class="trk" style="left:775px;top:803.3px;width:108px"></div>
<div class="thm" style="left:812px;top:793.3px"></div>
<div class="ent" style="left:893px;top:795px;width:46px;height:20px;line-height:19px"><span class="num">10</span></div>
<svg class="ic" style="left:691.5px;top:799.8px" width="11" height="11" viewBox="0 0 11 11"><circle cx="5.5" cy="5.5" r="4.9" fill="none" stroke="#222" stroke-width="1"/><rect x="4.95" y="4.6" width="1.1" height="3.8" fill="#222"/><rect x="4.95" y="2.6" width="1.1" height="1.1" fill="#222"/></svg>
<div class="t" style="left:588px;top:825.04px;font-size:12px;color:#000;">Stack Spacing (mm)</div>
<div class="trk" style="left:775px;top:829.4px;width:108px"></div>
<div class="thm" style="left:794px;top:819.4px"></div>
<div class="ent" style="left:893px;top:821px;width:46px;height:20px;line-height:19px"><span class="num">0.035</span></div>
<svg class="ic" style="left:704.5px;top:825.9px" width="11" height="11" viewBox="0 0 11 11"><circle cx="5.5" cy="5.5" r="4.9" fill="none" stroke="#222" stroke-width="1"/><rect x="4.95" y="4.6" width="1.1" height="3.8" fill="#222"/><rect x="4.95" y="2.6" width="1.1" height="1.1" fill="#222"/></svg>
<div class="t" style="left:588px;top:851.04px;font-size:12px;color:#000;">Tone Cutoff</div>
<div class="trk" style="left:775px;top:855.4px;width:108px"></div>
<div class="thm" style="left:790px;top:845.4px"></div>
<div class="ent" style="left:893px;top:847px;width:46px;height:20px;line-height:19px"><span class="num">0.080</span></div>
<svg class="ic" style="left:662.5px;top:851.9px" width="11" height="11" viewBox="0 0 11 11"><circle cx="5.5" cy="5.5" r="4.9" fill="none" stroke="#222" stroke-width="1"/><rect x="4.95" y="4.6" width="1.1" height="3.8" fill="#222"/><rect x="4.95" y="2.6" width="1.1" height="1.1" fill="#222"/></svg>
<div class="t" style="left:588px;top:877.14px;font-size:12px;color:#000;">Tone Response</div>
<div class="trk" style="left:775px;top:881.5px;width:108px"></div>
<div class="thm" style="left:810px;top:871.5px"></div>
<div class="ent" style="left:893px;top:873px;width:46px;height:20px;line-height:19px"><span class="num">1.000</span></div>
<svg class="ic" style="left:678.5px;top:878.0px" width="11" height="11" viewBox="0 0 11 11"><circle cx="5.5" cy="5.5" r="4.9" fill="none" stroke="#222" stroke-width="1"/><rect x="4.95" y="4.6" width="1.1" height="3.8" fill="#222"/><rect x="4.95" y="2.6" width="1.1" height="1.1" fill="#222"/></svg>
<div class="t" style="left:588px;top:903.24px;font-size:12px;color:#000;">XY Jitter (mm)</div>
<div class="trk" style="left:775px;top:907.6px;width:108px"></div>
<div class="thm" style="left:791px;top:897.6px"></div>
<div class="ent" style="left:893px;top:899px;width:46px;height:20px;line-height:19px"><span class="num">0.020</span></div>
<svg class="ic" style="left:673.5px;top:904.1px" width="11" height="11" viewBox="0 0 11 11"><circle cx="5.5" cy="5.5" r="4.9" fill="none" stroke="#222" stroke-width="1"/><rect x="4.95" y="4.6" width="1.1" height="3.8" fill="#222"/><rect x="4.95" y="2.6" width="1.1" height="1.1" fill="#222"/></svg>
<div class="t" style="left:588px;top:929.24px;font-size:12px;color:#000;">Face Detail Boost</div>
<div class="trk" style="left:775px;top:933.6px;width:108px"></div>
<div class="thm" style="left:823px;top:923.6px"></div>
<div class="ent" style="left:893px;top:925px;width:46px;height:20px;line-height:19px"><span class="num">1.50</span></div>
<svg class="ic" style="left:688.5px;top:930.1px" width="11" height="11" viewBox="0 0 11 11"><circle cx="5.5" cy="5.5" r="4.9" fill="none" stroke="#222" stroke-width="1"/><rect x="4.95" y="4.6" width="1.1" height="3.8" fill="#222"/><rect x="4.95" y="2.6" width="1.1" height="1.1" fill="#222"/></svg>
<div class="t" style="left:982px;top:534.64px;font-size:12px;color:#000;">Relief / Max Depth (mm)</div>
<div class="trk" style="left:1251px;top:539.0px;width:108px"></div>
<div class="thm" style="left:1347px;top:529.0px"></div>
<div class="ent" style="left:1377px;top:531px;width:46px;height:20px;line-height:19px"><span class="num">12.00</span></div>
<svg class="ic" style="left:1122.5px;top:535.5px" width="11" height="11" viewBox="0 0 11 11"><circle cx="5.5" cy="5.5" r="4.9" fill="none" stroke="#222" stroke-width="1"/><rect x="4.95" y="4.6" width="1.1" height="3.8" fill="#222"/><rect x="4.95" y="2.6" width="1.1" height="1.1" fill="#222"/></svg>
<div class="t" style="left:982px;top:560.64px;font-size:12px;color:#000;">Depth Gamma</div>
<div class="trk" style="left:1251px;top:565.0px;width:108px"></div>
<div class="thm" style="left:1278px;top:555.0px"></div>
<div class="ent" style="left:1377px;top:557px;width:46px;height:20px;line-height:19px"><span class="num">1.000</span></div>
<svg class="ic" style="left:1069.5px;top:561.5px" width="11" height="11" viewBox="0 0 11 11"><circle cx="5.5" cy="5.5" r="4.9" fill="none" stroke="#222" stroke-width="1"/><rect x="4.95" y="4.6" width="1.1" height="3.8" fill="#222"/><rect x="4.95" y="2.6" width="1.1" height="1.1" fill="#222"/></svg>
<div class="t" style="left:982px;top:586.64px;font-size:12px;color:#000;">Depth Curve</div>
<div class="trk" style="left:1251px;top:591.0px;width:108px"></div>
<div class="thm" style="left:1287px;top:581.0px"></div>
<div class="ent" style="left:1377px;top:583px;width:46px;height:20px;line-height:19px"><span class="num">1.200</span></div>
<svg class="ic" style="left:1058.5px;top:587.5px" width="11" height="11" viewBox="0 0 11 11"><circle cx="5.5" cy="5.5" r="4.9" fill="none" stroke="#222" stroke-width="1"/><rect x="4.95" y="4.6" width="1.1" height="3.8" fill="#222"/><rect x="4.95" y="2.6" width="1.1" height="1.1" fill="#222"/></svg>
<div class="t" style="left:982px;top:612.64px;font-size:12px;color:#000;">Depth Contrast</div>
<div class="trk" style="left:1251px;top:617.0px;width:108px"></div>
<div class="thm" style="left:1275px;top:607.0px"></div>
<div class="ent" style="left:1377px;top:609px;width:46px;height:20px;line-height:19px"><span class="num">1.000</span></div>
<svg class="ic" style="left:1072.5px;top:613.5px" width="11" height="11" viewBox="0 0 11 11"><circle cx="5.5" cy="5.5" r="4.9" fill="none" stroke="#222" stroke-width="1"/><rect x="4.95" y="4.6" width="1.1" height="3.8" fill="#222"/><rect x="4.95" y="2.6" width="1.1" height="1.1" fill="#222"/></svg>
<div class="t" style="left:982px;top:638.64px;font-size:12px;color:#000;">Depth Bias</div>
<div class="trk" style="left:1251px;top:643.0px;width:108px"></div>
<div class="thm" style="left:1299px;top:633.0px"></div>
<div class="ent" style="left:1377px;top:635px;width:46px;height:20px;line-height:19px"><span class="num">0.000</span></div>
<svg class="ic" style="left:1048.5px;top:639.5px" width="11" height="11" viewBox="0 0 11 11"><circle cx="5.5" cy="5.5" r="4.9" fill="none" stroke="#222" stroke-width="1"/><rect x="4.95" y="4.6" width="1.1" height="3.8" fill="#222"/><rect x="4.95" y="2.6" width="1.1" height="1.1" fill="#222"/></svg>
<div class="t" style="left:982px;top:664.64px;font-size:12px;color:#000;">Clamp Low %</div>
<div class="trk" style="left:1251px;top:669.0px;width:108px"></div>
<div class="thm" style="left:1260px;top:659.0px"></div>
<div class="ent" style="left:1377px;top:661px;width:46px;height:20px;line-height:19px"><span class="num">2.00</span></div>
<svg class="ic" style="left:1065.5px;top:665.5px" width="11" height="11" viewBox="0 0 11 11"><circle cx="5.5" cy="5.5" r="4.9" fill="none" stroke="#222" stroke-width="1"/><rect x="4.95" y="4.6" width="1.1" height="3.8" fill="#222"/><rect x="4.95" y="2.6" width="1.1" height="1.1" fill="#222"/></svg>
<div class="t" style="left:982px;top:690.64px;font-size:12px;color:#000;">Clamp High %</div>
<div class="trk" style="left:1251px;top:695.0px;width:108px"></div>
<div class="thm" style="left:1347px;top:685.0px"></div>
<div class="ent" style="left:1377px;top:687px;width:46px;height:20px;line-height:19px"><span class="num">100.00</span></div>
<svg class="ic" style="left:1069.5px;top:691.5px" width="11" height="11" viewBox="0 0 11 11"><circle cx="5.5" cy="5.5" r="4.9" fill="none" stroke="#222" stroke-width="1"/><rect x="4.95" y="4.6" width="1.1" height="3.8" fill="#222"/><rect x="4.95" y="2.6" width="1.1" height="1.1" fill="#222"/></svg>
<div class="t" style="left:982px;top:716.64px;font-size:12px;color:#000;">Depth Micro-Relief</div>
<div class="trk" style="left:1251px;top:721.0px;width:108px"></div>
<div class="thm" style="left:1251px;top:711.0px"></div>
<div class="ent" style="left:1377px;top:713px;width:46px;height:20px;line-height:19px"><span class="num">0.000</span></div>
<svg class="ic" style="left:1092.5px;top:717.5px" width="11" height="11" viewBox="0 0 11 11"><circle cx="5.5" cy="5.5" r="4.9" fill="none" stroke="#222" stroke-width="1"/><rect x="4.95" y="4.6" width="1.1" height="3.8" fill="#222"/><rect x="4.95" y="2.6" width="1.1" height="1.1" fill="#222"/></svg>
<div class="t" style="left:982px;top:748.44px;font-size:12px;color:#000;">Depth Smooth</div>
<div class="trk" style="left:1251px;top:752.8px;width:108px"></div>
<div class="thm" style="left:1260px;top:742.8px"></div>
<div class="ent" style="left:1377px;top:744px;width:46px;height:20px;line-height:19px"><span class="num">2</span></div>
<svg class="ic" style="left:1069.5px;top:749.3px" width="11" height="11" viewBox="0 0 11 11"><circle cx="5.5" cy="5.5" r="4.9" fill="none" stroke="#222" stroke-width="1"/><rect x="4.95" y="4.6" width="1.1" height="3.8" fill="#222"/><rect x="4.95" y="2.6" width="1.1" height="1.1" fill="#222"/></svg>
<div class="t" style="left:982px;top:774.54px;font-size:12px;color:#000;">Depth Multi</div>
<div class="trk" style="left:1251px;top:778.9px;width:108px"></div>
<div class="thm" style="left:1292px;top:768.9px"></div>
<div class="ent" style="left:1377px;top:770px;width:46px;height:20px;line-height:19px"><span class="num">2.00</span></div>
<svg class="ic" style="left:1055.5px;top:775.4px" width="11" height="11" viewBox="0 0 11 11"><circle cx="5.5" cy="5.5" r="4.9" fill="none" stroke="#222" stroke-width="1"/><rect x="4.95" y="4.6" width="1.1" height="3.8" fill="#222"/><rect x="4.95" y="2.6" width="1.1" height="1.1" fill="#222"/></svg>
<div class="t" style="left:982px;top:800.64px;font-size:12px;color:#000;">Depth Scale</div>
<div class="trk" style="left:1251px;top:805.0px;width:108px"></div>
<div class="thm" style="left:1278px;top:795.0px"></div>
<div class="ent" style="left:1377px;top:797px;width:46px;height:20px;line-height:19px"><span class="num">1.00</span></div>
<svg class="ic" style="left:1054.5px;top:801.5px" width="11" height="11" viewBox="0 0 11 11"><circle cx="5.5" cy="5.5" r="4.9" fill="none" stroke="#222" stroke-width="1"/><rect x="4.95" y="4.6" width="1.1" height="3.8" fill="#222"/><rect x="4.95" y="2.6" width="1.1" height="1.1" fill="#222"/></svg>
<div class="t" style="left:982px;top:826.64px;font-size:12px;color:#000;">Depth Round</div>
<div class="trk" style="left:1251px;top:831.0px;width:108px"></div>
<div class="thm" style="left:1251px;top:821.0px"></div>
<div class="ent" style="left:1377px;top:823px;width:46px;height:20px;line-height:19px"><span class="num">0.00</span></div>
<svg class="ic" style="left:1062.5px;top:827.5px" width="11" height="11" viewBox="0 0 11 11"><circle cx="5.5" cy="5.5" r="4.9" fill="none" stroke="#222" stroke-width="1"/><rect x="4.95" y="4.6" width="1.1" height="3.8" fill="#222"/><rect x="4.95" y="2.6" width="1.1" height="1.1" fill="#222"/></svg>
<div class="t" style="left:982px;top:852.74px;font-size:12px;color:#000;">Depth Visible Back (mm) (50=full, 0=hidden)</div>
<div class="trk" style="left:1251px;top:857.1px;width:108px"></div>
<div class="thm" style="left:1347px;top:847.1px"></div>
<div class="ent" style="left:1377px;top:849px;width:46px;height:20px;line-height:19px"><span class="num">50.0</span></div>
<svg class="ic" style="left:1227.5px;top:853.6px" width="11" height="11" viewBox="0 0 11 11"><circle cx="5.5" cy="5.5" r="4.9" fill="none" stroke="#222" stroke-width="1"/><rect x="4.95" y="4.6" width="1.1" height="3.8" fill="#222"/><rect x="4.95" y="2.6" width="1.1" height="1.1" fill="#222"/></svg>
<div class="t" style="left:982px;top:878.84px;font-size:12px;color:#000;">Depth Visible Front (mm) (50=full, 0=hidden)</div>
<div class="trk" style="left:1251px;top:883.2px;width:108px"></div>
<div class="thm" style="left:1347px;top:873.2px"></div>
<div class="ent" style="left:1377px;top:875px;width:46px;height:20px;line-height:19px"><span class="num">50.0</span></div>
<svg class="ic" style="left:1230.5px;top:879.7px" width="11" height="11" viewBox="0 0 11 11"><circle cx="5.5" cy="5.5" r="4.9" fill="none" stroke="#222" stroke-width="1"/><rect x="4.95" y="4.6" width="1.1" height="3.8" fill="#222"/><rect x="4.95" y="2.6" width="1.1" height="1.1" fill="#222"/></svg>
<div class="chk on" style="left:982px;top:902.0px"><svg width="16" height="16" viewBox="0 0 16 16"><path d="M4.2 8.2 L6.8 10.8 L11.8 5.6" fill="none" stroke="#fff" stroke-width="1.3"/></svg></div>
<div class="t" style="left:1003px;top:904.64px;font-size:12px;color:#000;">Recenter after clip</div>
<div class="chk" style="left:982px;top:923.6px"></div>
<div class="t" style="left:1003px;top:926.14px;font-size:12px;color:#000;">Invert Depth (inside-out)</div>
<div class="chk" style="left:982px;top:946.0px"></div>
<div class="t" style="left:1003px;top:948.64px;font-size:12px;color:#000;">Prioritize Subject Depth</div>
<div class="t" style="left:982px;top:971.64px;font-size:12px;color:#000;">Subject Depth Strength</div>
<div class="trk" style="left:1251px;top:976.0px;width:108px"></div>
<div class="thm dis" style="left:1284px;top:966.0px"></div>
<div class="ent dis" style="left:1377px;top:968px;width:46px;height:20px;line-height:19px"><span class="num">0.350</span></div>
<svg class="ic" style="left:1114.5px;top:972.5px" width="11" height="11" viewBox="0 0 11 11"><circle cx="5.5" cy="5.5" r="4.9" fill="none" stroke="#222" stroke-width="1"/><rect x="4.95" y="4.6" width="1.1" height="3.8" fill="#222"/><rect x="4.95" y="2.6" width="1.1" height="1.1" fill="#222"/></svg>
<div class="frm" style="left:1450px;top:536px;width:352px;height:95px"></div>
<div class="t ftl" style="left:1455px;top:530.14px;font-size:12px;padding:0 3px">Point Cleanup</div>
<div class="chk" style="left:1460px;top:553.5px"></div>
<div class="t" style="left:1481px;top:556.14px;font-size:12px;color:#000;">Cull Rear Points</div>
<div class="t" style="left:1460px;top:578.54px;font-size:12px;color:#000;">Surface Thickness (mm)</div>
<div class="trk" style="left:1619px;top:582.9px;width:118px"></div>
<div class="thm" style="left:1628px;top:572.9px"></div>
<div class="ent" style="left:1747px;top:574px;width:46px;height:20px;line-height:19px"><span class="num">0.35</span></div>
<svg class="ic" style="left:1597.5px;top:579.4px" width="11" height="11" viewBox="0 0 11 11"><circle cx="5.5" cy="5.5" r="4.9" fill="none" stroke="#222" stroke-width="1"/><rect x="4.95" y="4.6" width="1.1" height="3.8" fill="#222"/><rect x="4.95" y="2.6" width="1.1" height="1.1" fill="#222"/></svg>
<div class="t" style="left:1460px;top:604.54px;font-size:12px;color:#000;">Neighborhood (px)</div>
<div class="trk" style="left:1619px;top:608.9px;width:118px"></div>
<div class="thm" style="left:1653px;top:598.9px"></div>
<div class="ent" style="left:1747px;top:600px;width:46px;height:20px;line-height:19px"><span class="num">2</span></div>
<svg class="ic" style="left:1571.5px;top:605.4px" width="11" height="11" viewBox="0 0 11 11"><circle cx="5.5" cy="5.5" r="4.9" fill="none" stroke="#222" stroke-width="1"/><rect x="4.95" y="4.6" width="1.1" height="3.8" fill="#222"/><rect x="4.95" y="2.6" width="1.1" height="1.1" fill="#222"/></svg>
<div class="t" style="left:1452px;top:649.04px;font-size:12px;color:#000;">Sphere / Quad Radius (mm)</div>
<div class="trk" style="left:1637px;top:653.4px;width:108px"></div>
<div class="thm" style="left:1657px;top:643.4px"></div>
<div class="ent" style="left:1755px;top:645px;width:46px;height:20px;line-height:19px"><span class="num">0.050</span></div>
<svg class="ic" style="left:1609.5px;top:649.9px" width="11" height="11" viewBox="0 0 11 11"><circle cx="5.5" cy="5.5" r="4.9" fill="none" stroke="#222" stroke-width="1"/><rect x="4.95" y="4.6" width="1.1" height="3.8" fill="#222"/><rect x="4.95" y="2.6" width="1.1" height="1.1" fill="#222"/></svg>
<div class="t" style="left:1452px;top:675.04px;font-size:12px;color:#000;">Sphere Preview Max (0=auto)</div>
<div class="trk" style="left:1637px;top:679.4px;width:108px"></div>
<div class="thm" style="left:1637px;top:669.4px"></div>
<div class="ent" style="left:1755px;top:671px;width:46px;height:20px;line-height:19px"><span class="num">0</span></div>
<svg class="ic" style="left:1616.5px;top:675.9px" width="11" height="11" viewBox="0 0 11 11"><circle cx="5.5" cy="5.5" r="4.9" fill="none" stroke="#222" stroke-width="1"/><rect x="4.95" y="4.6" width="1.1" height="3.8" fill="#222"/><rect x="4.95" y="2.6" width="1.1" height="1.1" fill="#222"/></svg>
<div class="t" style="left:1452px;top:701.04px;font-size:12px;color:#000;">Shells (layers)</div>
<div class="trk" style="left:1637px;top:705.4px;width:108px"></div>
<div class="thm" style="left:1637px;top:695.4px"></div>
<div class="ent" style="left:1755px;top:697px;width:46px;height:20px;line-height:19px"><span class="num">1</span></div>
<svg class="ic" style="left:1533.5px;top:701.9px" width="11" height="11" viewBox="0 0 11 11"><circle cx="5.5" cy="5.5" r="4.9" fill="none" stroke="#222" stroke-width="1"/><rect x="4.95" y="4.6" width="1.1" height="3.8" fill="#222"/><rect x="4.95" y="2.6" width="1.1" height="1.1" fill="#222"/></svg>
<div class="t" style="left:1452px;top:727.04px;font-size:12px;color:#000;">Shell Spacing (mm)</div>
<div class="trk" style="left:1637px;top:731.4px;width:108px"></div>
<div class="thm" style="left:1643px;top:721.4px"></div>
<div class="ent" style="left:1755px;top:723px;width:46px;height:20px;line-height:19px"><span class="num">0.150</span></div>
<svg class="ic" style="left:1565.5px;top:727.9px" width="11" height="11" viewBox="0 0 11 11"><circle cx="5.5" cy="5.5" r="4.9" fill="none" stroke="#222" stroke-width="1"/><rect x="4.95" y="4.6" width="1.1" height="3.8" fill="#222"/><rect x="4.95" y="2.6" width="1.1" height="1.1" fill="#222"/></svg>
<div class="t" style="left:1452px;top:753.04px;font-size:12px;color:#000;">Shell XY Offset (mm)</div>
<div class="trk" style="left:1637px;top:757.4px;width:108px"></div>
<div class="thm" style="left:1665px;top:747.4px"></div>
<div class="ent" style="left:1755px;top:749px;width:46px;height:20px;line-height:19px"><span class="num">0.015</span></div>
<svg class="ic" style="left:1572.5px;top:753.9px" width="11" height="11" viewBox="0 0 11 11"><circle cx="5.5" cy="5.5" r="4.9" fill="none" stroke="#222" stroke-width="1"/><rect x="4.95" y="4.6" width="1.1" height="3.8" fill="#222"/><rect x="4.95" y="2.6" width="1.1" height="1.1" fill="#222"/></svg>
<div class="btn" style="left:1452px;top:786px;width:170px;height:22px;line-height:20.5px;font-size:11.6px">Export OBJ (Point Cloud)</div>
<div class="btn" style="left:1631px;top:786px;width:170px;height:22px;line-height:20.5px;font-size:11.6px">Export STL (Spheres)</div>
<div class="btn" style="left:1452px;top:817px;width:170px;height:22px;line-height:20.5px;font-size:11.6px">Export XYZ (Point Cloud)</div>
<div class="btn" style="left:1631px;top:817px;width:170px;height:22px;line-height:20.5px;font-size:11.6px">Export PLY (Point Cloud)</div>
<div class="btn" style="left:1452px;top:848px;width:170px;height:22px;line-height:20.5px;font-size:11.6px">Export OBJ (Quads)</div>
<div class="btn" style="left:1631px;top:848px;width:170px;height:22px;line-height:20.5px;font-size:11.6px">Export STL (Quads)</div>
<div class="btn" style="left:1452px;top:879px;width:170px;height:22px;line-height:20.5px;font-size:11.6px">Export DXF</div>
<div class="btn" style="left:1631px;top:879px;width:170px;height:22px;line-height:20.5px;font-size:11.6px">Export CAD (OpenSCAD)</div>
<div class="btn" style="left:1452px;top:910px;width:349px;height:22px;line-height:20.5px;font-size:11.6px">Export STL (Closed Surface)</div>
<div style="position:absolute;left:-2px;top:518px;width:328px;height:64px;border:8px solid #ff0000"></div>
<svg style="position:absolute;left:0;top:0" width="1918" height="1020"><path d="M346 533 L394 488 L398 501.5 L478 484 L485 519 L407 538 L409 552 Z" fill="#ff0000"/></svg>
</body></html>
